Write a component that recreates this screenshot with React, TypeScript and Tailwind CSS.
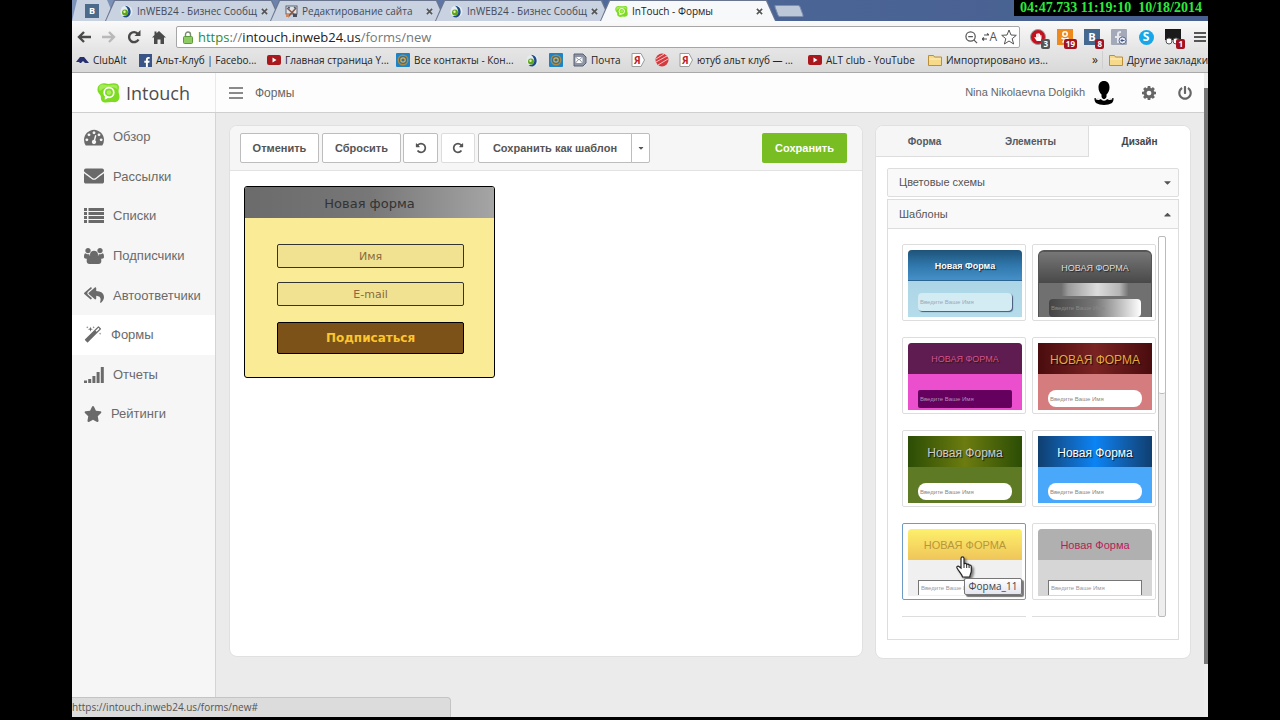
import type { ReactNode } from 'react';
import clsx from 'clsx';
import {
  FaEnvelope,
  FaReplyAll,
  FaStar,
  FaPowerOff,
  FaCaretDown,
  FaCaretUp,
  FaFacebookF,
  FaHandPaper,
} from 'react-icons/fa';

type IconProps = { className?: string };

/* ---------- Icons ---------- */

function GaugeIcon({ className }: IconProps) {
  return (
    <svg viewBox="0 0 1792 1792" fill="currentColor" className={className}>
      <path d="M384 1152q0-53-37.5-90.5t-90.5-37.5-90.5 37.5-37.5 90.5 37.5 90.5 90.5 37.5 90.5-37.5 37.5-90.5zm192-448q0-53-37.5-90.5t-90.5-37.5-90.5 37.5-37.5 90.5 37.5 90.5 90.5 37.5 90.5-37.5 37.5-90.5zm428 481l101-382q6-26-7.5-48.5t-38.5-29.5-48 6.5-30 39.5l-101 382q-60 5-107 43.5t-63 98.5q-20 77 20 146t117 89 146-20 89-117q16-60-6-117t-72-91zm660-33q0-53-37.5-90.5t-90.5-37.5-90.5 37.5-37.5 90.5 37.5 90.5 90.5 37.5 90.5-37.5 37.5-90.5zm-640-640q0-53-37.5-90.5t-90.5-37.5-90.5 37.5-37.5 90.5 37.5 90.5 90.5 37.5 90.5-37.5 37.5-90.5zm448 192q0-53-37.5-90.5t-90.5-37.5-90.5 37.5-37.5 90.5 37.5 90.5 90.5 37.5 90.5-37.5 37.5-90.5zm320 448q0 261-141 483-19 29-54 29h-1402q-35 0-54-29-141-221-141-483 0-182 71-348t191-286 286-191 348-71 348 71 286 191 191 286 71 348z" />
    </svg>
  );
}

function ListIcon({ className }: IconProps) {
  return (
    <svg viewBox="0 0 20 20" fill="currentColor" className={className}>
      {[2, 6, 10, 14].map((y) => (
        <g key={y}>
          <rect x="0" y={y} width="3" height="3" />
          <rect x="4.5" y={y} width="15.5" height="3" />
        </g>
      ))}
    </svg>
  );
}

function UsersIcon({ className }: IconProps) {
  return (
    <svg viewBox="0 0 1920 1536" fill="currentColor" className={className}>
      <path d="M593 896q-162 5-265 128h-134q-82 0-138-40.5t-56-118.5q0-353 124-353 6 0 43.5 21t97.5 42.5 119 21.5q67 0 133-23-5 37-5 66 0 139 81 256zm1071 381q0 120-73 189.5t-194 69.5h-874q-121 0-194-69.5t-73-189.5q0-53 3.5-103.5t14-109 26.5-108.5 43-97.5 62-81 85.5-53.5 111.5-20q10 0 43 21.5t73 48 107 48 135 21.5 135-21.5 107-48 73-48 43-21.5q61 0 111.5 20t85.5 53.5 62 81 43 97.5 26.5 108.5 14 109 3.5 103.5zm-1024-1021q0 106-75 181t-181 75-181-75-75-181 75-181 181-75 181 75 75 181zm704 384q0 159-112.5 271.5t-271.5 112.5-271.5-112.5-112.5-271.5 112.5-271.5 271.5-112.5 271.5 112.5 112.5 271.5zm576 225q0 78-56 118.5t-138 40.5h-134q-103-123-265-128 81-117 81-256 0-29-5-66 66 23 133 23 59 0 119-21.5t97.5-42.5 43.5-21q124 0 124 353zm-128-609q0 106-75 181t-181 75-181-75-75-181 75-181 181-75 181 75 75 181z" />
    </svg>
  );
}

function MagicIcon({ className }: IconProps) {
  return (
    <svg viewBox="0 0 1792 1792" fill="currentColor" className={className}>
      <path d="M1254 581l293-293-107-107-293 293zm447-293q0 27-18 45l-1286 1286q-18 18-45 18t-45-18l-198-198q-18-18-18-45t18-45l1286-1286q18-18 45-18t45 18l198 198q18 18 18 45zm-1351-190l98 30-98 30-30 98-30-98-98-30 98-30 30-98zm350 162l196 60-196 60-60 196-60-196-196-60 196-60 60-196zm930 478l98 30-98 30-30 98-30-98-98-30 98-30 30-98zm-640-640l98 30-98 30-30 98-30-98-98-30 98-30 30-98z" />
    </svg>
  );
}

function SignalIcon({ className }: IconProps) {
  return (
    <svg viewBox="0 0 20 18" fill="currentColor" className={className}>
      <rect x="0" y="14.5" width="3" height="2.5" />
      <rect x="4.2" y="13" width="3" height="4" />
      <rect x="8.4" y="10" width="3" height="7" />
      <rect x="12.6" y="6" width="3" height="11" />
      <rect x="16.8" y="1" width="3" height="16" />
    </svg>
  );
}

function UndoIcon({ className }: IconProps) {
  return (
    <svg viewBox="0 0 1792 1792" fill="currentColor" className={className}>
      <path d="M1664 896q0 156-61 298t-164 245-245 164-298 61q-172 0-327-72.5t-264-204.5q-7-10-6.5-22.5t8.5-20.5l137-138q10-9 25-9 16 2 23 12 73 95 179 147t225 52q104 0 198.5-40.5t163.5-109.5 109.5-163.5 40.5-198.5-40.5-198.5-109.5-163.5-163.5-109.5-198.5-40.5q-98 0-188 35.5t-160 101.5l137 138q31 30 14 69-17 40-59 40h-448q-26 0-45-19t-19-45v-448q0-42 40-59 39-17 69 14l130 129q107-101 244.5-156.5t284.5-55.5q156 0 298 61t245 164 164 245 61 298z" />
    </svg>
  );
}

function CogIcon({ className }: IconProps) {
  return (
    <svg viewBox="128 128 1536 1536" fill="currentColor" className={className}>
      <path d="M1152 896q0-106-75-181t-181-75-181 75-75 181 75 181 181 75 181-75 75-181zm512-109v222q0 12-8 23t-20 13l-185 28q-19 54-39 91 35 50 107 138 10 12 10 25t-9 23q-27 37-99 108t-94 71q-12 0-26-9l-138-108q-44 23-91 38-16 136-29 186-7 28-36 28h-222q-14 0-24.5-8.5t-11.5-21.5l-28-184q-49-16-90-37l-141 107q-10 9-25 9-14 0-25-11-126-114-165-168-7-10-7-23 0-12 8-23 15-21 51-66.5t54-70.5q-27-50-41-99l-183-27q-13-2-21-12.5t-8-23.5v-222q0-12 8-23t19-13l186-28q14-46 39-92-40-57-107-138-10-12-10-24 0-10 9-23 26-36 98.5-107.5t94.5-71.5q13 0 26 10l138 107q44-23 91-38 16-136 29-186 7-28 36-28h222q14 0 24.5 8.5t11.5 21.5l28 184q49 16 90 37l142-107q9-9 24-9 13 0 25 10 129 119 165 170 7 8 7 22 0 12-8 23-15 21-51 66.5t-54 70.5q26 50 41 98l183 28q13 2 21 12.5t8 23.5z" />
    </svg>
  );
}

function IntouchLogo({ className }: IconProps) {
  return (
    <svg viewBox="0 0 24 22" className={className}>
      <path
        d="M4 1.5c3-1.500 5 0 8 0s6-1.500 9 0c2.500 1.500 2 4 1.500 6.500s1.500 5 1 8c-.7 4-4 5-7.500 4.500-3-.4-5 .8-8 .3-3.500-.6-4-3-4-6C4 12.500.5 11 .5 7.500.5 4.500 1.500 2.500 4 1.500z"
        fill="#7ddc1f"
      />
      <path d="M4 2.500c3-1 5 .5 8 .5s6-1.500 8.500 0c1 .8 1 2.500.8 4C16 3.500 8 4 3 9 1.500 6.500 2 3.500 4 2.500z" fill="#a5ea58" />
      <circle cx="12.500" cy="10.500" r="5" fill="none" stroke="#fff" strokeWidth="1.800" />
      <path d="M8.500 12.500L8 18l5-2.500z" fill="#fff" />
      <circle cx="12.500" cy="10.500" r="2.500" fill="#a9ec5c" />
    </svg>
  );
}

function SwirlIcon() {
  return (
    <svg viewBox="0 0 13 13" className="size-[13px] shrink-0">
      <circle cx="6.500" cy="6.500" r="6" fill="#e4ecf2" />
      <path d="M5 .8a6 6 0 0 1 1.500 11.700 6 6 0 0 1-4-1.500C8 12 11 6 5 .8z" fill="#1d4a86" />
      <circle cx="5" cy="7.500" r="3" fill="#5da51f" />
      <circle cx="4.500" cy="6.800" r="1.200" fill="#e5f3a5" />
    </svg>
  );
}

function ToolsIcon() {
  return (
    <svg viewBox="0 0 13 13" className="size-[13px] shrink-0">
      <rect x="1" y="1" width="11" height="8" fill="#dfe4ea" stroke="#5e6570" />
      <path d="M2 3l9 8M11 3l-8 9" stroke="#8a5a44" strokeWidth="1.600" />
      <path d="M3 2.500l2 .5M9 2l2 1.500" stroke="#3f5f93" strokeWidth="1.500" />
      <rect x="8" y="9" width="4" height="3" fill="#4b4f5c" />
      <rect x="1" y="9" width="3" height="3" fill="#c58a6a" />
    </svg>
  );
}

function YoutubeIcon() {
  return (
    <svg viewBox="0 0 14 10" className="h-[10px] w-[14px] shrink-0">
      <rect width="14" height="10" rx="2" fill="#a8181c" />
      <path d="M5.500 2.500v5l4-2.500z" fill="#fff" />
    </svg>
  );
}

function AtIcon() {
  return (
    <svg viewBox="0 0 14 14" className="size-[14px] shrink-0">
      <rect width="14" height="14" rx="1" fill="#1c84c6" />
      <circle cx="7" cy="7" r="4.800" fill="#3f6f86" stroke="#a98a4a" strokeWidth="1.400" />
      <circle cx="7" cy="7" r="2.200" fill="none" stroke="#d8b25c" strokeWidth="1.200" />
    </svg>
  );
}

function MailTagIcon() {
  return (
    <svg viewBox="0 0 14 14" className="size-[14px] shrink-0">
      <path d="M1 1h9l3 3v6l-3 3H1z" fill="#8d95a5" stroke="#596175" />
      <rect x="2.500" y="4" width="7" height="6" fill="#fff" />
      <path d="M2.500 4l3.500 3 3.500-3M2.500 10l2.500-3M9.500 10L7 7" stroke="#717b90" fill="none" strokeWidth=".8" />
    </svg>
  );
}

function YandexIcon() {
  return (
    <span className="relative flex size-[14px] shrink-0 items-center">
      <svg viewBox="0 0 14 14" className="absolute inset-0">
        <path d="M1 .5h9l3.500 6.500-3.500 6.500H1z" fill="#fdfdfd" stroke="#9b9b9b" />
      </svg>
      <span className="relative pl-[3px] text-[10px] leading-none font-bold text-[#c0202c]">Я</span>
    </span>
  );
}

function RedGlobeIcon() {
  return (
    <svg viewBox="0 0 14 14" className="size-[14px] shrink-0">
      <circle cx="7" cy="7" r="6.500" fill="#d63a3f" />
      <path d="M1 6l8-5M1 9l11-6M3 12l10-6" stroke="#f3c4c4" strokeWidth="1" />
    </svg>
  );
}

function FolderIcon() {
  return (
    <svg viewBox="0 0 14 12" className="h-[12px] w-[14px] shrink-0">
      <path d="M.5 1.500h5l1 1.500h7v8.500H.5z" fill="#f7d98a" stroke="#b98f3a" />
      <path d="M1 5h12" stroke="#fdf0c4" />
    </svg>
  );
}

function ClubIcon() {
  return (
    <svg viewBox="0 0 13 8" className="h-[8px] w-[13px] shrink-0">
      <path d="M0 6l4-5h4l5 6H9L7 5 5 7H3l1-1z" fill="#26306e" />
    </svg>
  );
}

/* ---------- Browser chrome ---------- */

type BrowserTabProps = { icon: ReactNode; title: string; active?: boolean };

function BrowserTab({ icon, title, active }: BrowserTabProps) {
  return (
    <div
      className={clsx(
        '-ml-[11px] h-[21px] w-44 shrink-0 bg-[#69758f] px-px pt-px [clip-path:polygon(0_100%,9px_0,calc(100%-9px)_0,100%_100%)]',
        active && 'relative z-10',
      )}
    >
      <div
        className={clsx(
          'flex h-5 items-center gap-1 pr-3 pl-[14px] [clip-path:polygon(0_100%,9px_0,calc(100%-9px)_0,100%_100%)]',
          active ? 'bg-[#f7f8fa]' : 'bg-[#c9d2e0]',
        )}
      >
        {icon}
        <span
          className={clsx(
            'w-[126px] text-[10px] whitespace-nowrap',
            active ? 'text-[#222]' : 'text-[#444b58]',
          )}
        >
          {title}
        </span>
        <button aria-label="Закрыть вкладку" className="text-[#555]">
          <svg viewBox="0 0 8 8" className="size-[7px]" stroke="currentColor" strokeWidth="1.800">
            <path d="M1 1l6 6M7 1L1 7" />
          </svg>
        </button>
      </div>
    </div>
  );
}

function TabStrip() {
  return (
    <div className="flex h-[21px] items-end overflow-hidden bg-gradient-to-r from-[#7f93b8] via-[#4c6699] to-[#47608f]">
      <div className="flex h-[21px] w-[44px] shrink-0 items-center bg-[#c9d2e0] pl-[13px] [clip-path:polygon(0_100%,5px_0,calc(100%-9px)_0,100%_100%)]">
        <span className="flex size-[14px] items-center justify-center bg-[#4c6a8c] text-[9px] font-bold text-white">
          B
        </span>
      </div>
      <BrowserTab icon={<SwirlIcon />} title="InWEB24 - Бизнес Сообщ" />
      <BrowserTab icon={<ToolsIcon />} title="Редактирование сайта" />
      <BrowserTab icon={<SwirlIcon />} title="InWEB24 - Бизнес Сообщ" />
      <BrowserTab icon={<IntouchLogo className="size-[13px] shrink-0" />} title="InTouch - Формы" active />
      <button
        aria-label="Новая вкладка"
        className="mb-1 h-3 w-[26px] shrink-0 skew-x-[20deg] rounded-xs border border-[#7e8fae] bg-[#bcc7d8]"
      />
      <div className="ml-auto h-[21px] shrink-0">
        <div className="h-4 bg-black px-[6px] font-['Liberation_Serif',serif] text-[14px] leading-4 font-bold whitespace-pre text-[#2bea3a]">
          04:47.733 11:19:10{'  '}10/18/2014
        </div>
      </div>
    </div>
  );
}

type ExtensionProps = { label: string; badge?: string; badgeClass?: string; children: ReactNode };

function Extension({ label, badge, badgeClass, children }: ExtensionProps) {
  return (
    <button aria-label={label} className="relative flex size-4 shrink-0 items-center justify-center">
      {children}
      {badge && (
        <span
          className={clsx(
            'absolute -right-1 -bottom-1 rounded-xs px-[2px] text-[8px] leading-[10px] font-bold text-white',
            badgeClass,
          )}
        >
          {badge}
        </span>
      )}
    </button>
  );
}

function AddressBar() {
  return (
    <div className="relative z-10 flex h-[27px] items-center bg-gradient-to-b from-[#fafafa] to-[#e6e6e6] pt-[5px] pl-[5px]">
      <div className="flex w-[99px] shrink-0 items-center gap-[11px] text-[#4a4a4a]">
        <svg viewBox="0 0 14 12" className="h-[12px] w-[14px]" fill="none" stroke="currentColor" strokeWidth="2.400">
          <path d="M14 6H2M7 1L2 6l5 5" />
        </svg>
        <svg viewBox="0 0 14 12" className="h-[12px] w-[14px]" fill="none" stroke="#b9b9b9" strokeWidth="2.400">
          <path d="M0 6h12M7 1l5 5-5 5" />
        </svg>
        <svg viewBox="0 0 14 14" className="size-[14px]" fill="none" stroke="currentColor" strokeWidth="2.400">
          <path d="M11.500 9.500A5 5 0 1 1 11 4" />
          <path d="M13.500 0v6h-6z" fill="currentColor" stroke="none" />
        </svg>
        <svg viewBox="0 0 14 14" className="size-[14px]" fill="currentColor">
          <path d="M7 1l7 6.500h-2V14H8.500V9.500h-3V14H2V7.500H0L2.500 5V1.500h2v1.700z" />
        </svg>
      </div>
      <div className="flex h-[22px] min-w-0 flex-1 items-center rounded-xs border border-[#a6a6a6] bg-white px-[6px]">
        <svg viewBox="0 0 10 13" className="mr-[5px] h-[13px] w-[10px] shrink-0">
          <path d="M2.500 6V3.500a2.500 2.500 0 0 1 5 0V6" fill="none" stroke="#7c8b74" strokeWidth="1.400" />
          <rect x=".5" y="5.500" width="9" height="7" rx="1" fill="#8ecb62" stroke="#5d9a3c" />
        </svg>
        <span className="text-[13px] leading-none whitespace-nowrap text-[#777]">
          <span className="text-[#2c8a34]">https</span>://
          <span className="text-[#222]">intouch.inweb24.us</span>/forms/new
        </span>
        <div className="-mr-1 ml-auto flex items-center gap-1 text-[#555]">
          <svg viewBox="0 0 14 14" className="size-[13px]" fill="none" stroke="currentColor" strokeWidth="1.300">
            <circle cx="6" cy="6" r="5" />
            <path d="M3.500 6h5M9.500 9.500L13 13" />
          </svg>
          <span className="flex items-center text-[12px] leading-none">
            <svg viewBox="0 0 7 8" className="h-2 w-[7px]" fill="none" stroke="currentColor" strokeWidth="1.200">
              <path d="M2 2h5M5 .5L7 2M0 6h5M2 4.500L0 6l2 1.500" />
            </svg>
            A
          </span>
          <svg viewBox="0 0 16 16" className="size-4" fill="none" stroke="currentColor">
            <path d="M8 1l2 5 5.300.3-4.100 3.400L12.600 15 8 12l-4.600 3 1.400-5.300L.7 6.300 6 6z" />
          </svg>
        </div>
      </div>
      <div className="ml-[10px] flex w-[178px] shrink-0 items-center gap-[11px]">
        <Extension label="AdBlock" badge="3" badgeClass="bg-[#555]">
          <span className="flex size-4 items-center justify-center rounded-full border border-[#999] bg-[#c1121f]">
            <FaHandPaper className="size-2 text-white" />
          </span>
        </Extension>
        <Extension label="Одноклассники" badge="19" badgeClass="bg-[#a3121f]">
          <svg viewBox="0 0 16 16" className="size-4">
            <rect width="16" height="16" fill="#ee8a1d" />
            <circle cx="8" cy="5" r="2.200" fill="none" stroke="#fff" strokeWidth="1.500" />
            <path d="M4.500 9q3.500 2 7 0M8 10.500L5.500 13.500M8 10.500l2.500 3" stroke="#fff" strokeWidth="1.500" fill="none" />
          </svg>
        </Extension>
        <Extension label="ВКонтакте" badge="8" badgeClass="bg-[#a3121f]">
          <span className="flex size-4 items-center justify-center bg-[#45688e] text-[11px] font-bold text-white">
            B
          </span>
        </Extension>
        <Extension label="Facebook">
          <svg viewBox="0 0 16 16" className="size-4">
            <rect width="16" height="16" rx="1" fill="#a3a9b8" />
            <path d="M7 14V5q0-2 3-2M4 8h6" stroke="#e6e8ee" strokeWidth="2" fill="none" />
            <circle cx="11.500" cy="11.500" r="3.500" fill="#e9ecf3" stroke="#5b6c96" />
            <path d="M13.500 11.500h-3.500M11.500 10L10 11.500l1.500 1.500" stroke="#3f5384" fill="none" />
          </svg>
        </Extension>
        <Extension label="Skype">
          <span className="flex size-[15px] items-center justify-center rounded-full bg-[#17a6e8] text-[12px] leading-none font-bold text-white">
            S
          </span>
        </Extension>
        <Extension label="Граббер" badge="1" badgeClass="bg-[#a3121f]">
          <svg viewBox="0 0 16 16" className="size-4">
            <path d="M0 0h16v11H0z" fill="#1a1a1a" />
            <circle cx="4" cy="12" r="3" fill="#fff" stroke="#555" />
            <circle cx="11" cy="12" r="3" fill="#fff" stroke="#555" />
          </svg>
        </Extension>
        <button aria-label="Меню" className="flex w-[14px] shrink-0 flex-col gap-[2px] pl-[2px]">
          <span className="h-[2px] bg-[#555]" />
          <span className="h-[2px] bg-[#555]" />
          <span className="h-[2px] bg-[#555]" />
        </button>
      </div>
    </div>
  );
}

const bookmarks: { icon: ReactNode; label?: string; width: string }[] = [
  { icon: <ClubIcon />, label: 'ClubAlt', width: 'w-[63px]' },
  {
    icon: (
      <span className="flex size-[13px] shrink-0 items-end justify-end bg-[#3b5486]">
        <FaFacebookF className="size-[10px] text-white" />
      </span>
    ),
    label: 'Альт-Клуб | Facebo...',
    width: 'w-[128px]',
  },
  { icon: <YoutubeIcon />, label: 'Главная страница Y...', width: 'w-[129px]' },
  { icon: <AtIcon />, label: 'Все контакты - Кон...', width: 'w-[130px]' },
  { icon: <SwirlIcon />, width: 'w-[23px]' },
  { icon: <AtIcon />, width: 'w-[24px]' },
  { icon: <MailTagIcon />, label: 'Почта', width: 'w-[58px]' },
  { icon: <YandexIcon />, width: 'w-[24px]' },
  { icon: <RedGlobeIcon />, width: 'w-[24px]' },
  { icon: <YandexIcon />, label: 'ютуб альт клуб — ...', width: 'w-[129px]' },
  { icon: <YoutubeIcon />, label: 'ALT club - YouTube', width: 'w-[120px]' },
  { icon: <FolderIcon />, label: 'Импортировано из...', width: 'w-[130px]' },
];

function BookmarksBar() {
  return (
    <div className="flex h-[25px] items-center overflow-hidden border-b border-[#a9a9a9] bg-gradient-to-b from-[#e6e6e6] to-[#d9d9d9] pl-1 text-[10px] text-[#222]">
      {bookmarks.map((b, i) => (
        <a key={i} href="#" className={clsx('flex shrink-0 items-center gap-1 whitespace-nowrap', b.width)}>
          {b.icon}
          {b.label}
        </a>
      ))}
      <div className="ml-auto flex w-[116px] shrink-0 items-center">
        <button aria-label="Другие элементы" className="w-[16px] border-r border-[#cfcfcf] text-left text-[12px]">
          »
        </button>
        <a href="#" className="flex items-center gap-1 pl-[6px] whitespace-nowrap">
          <FolderIcon />
          Другие закладки
        </a>
      </div>
    </div>
  );
}

/* ---------- App ---------- */

function AppHeader() {
  return (
    <header className="flex h-10 shrink-0 border-b border-[#cfcfcf] bg-[#fdfdfd]">
      <a href="#" className="flex w-36 shrink-0 items-center gap-[6px] border-r border-[#e9e9e9] pl-[25px]">
        <IntouchLogo className="h-[22px] w-[23px]" />
        <span className="font-['Open_Sans',sans-serif] text-[18px] leading-none text-[#4d4d4d]">Intouch</span>
      </a>
      <button aria-label="Свернуть меню" className="ml-[13px] flex flex-col justify-center gap-[3px]">
        <span className="h-[2px] w-[14px] bg-[#8a8a8a]" />
        <span className="h-[2px] w-[14px] bg-[#8a8a8a]" />
        <span className="h-[2px] w-[14px] bg-[#8a8a8a]" />
      </button>
      <h1 className="ml-3 self-center text-[12px] text-[#666]">Формы</h1>
      <div className="ml-auto flex items-center pr-3 text-[#666]">
        <span className="text-[11px]">Nina Nikolaevna Dolgikh</span>
        <svg viewBox="0 0 20 24" className="ml-[9px] h-6 w-5">
          <path
            d="M10 0c3.500 0 5.500 2.500 5.500 6.500 0 3-1.300 5.500-3 7v3.300c1.200 1.600 3.700 1 7 .2.300 2-.6 4-1.500 5-2 1.300-5 2-8 2s-6-.7-8-2c-.9-1-1.800-3-1.500-5 3.300.8 5.800 1.400 7-.2v-3.300c-1.700-1.500-3-4-3-7C4.500 2.500 6.500 0 10 0z"
            fill="#000"
          />
          <path d="M2 17.500q3 1.500 5-.5 3 4 6 0 2 2 5 .5" stroke="#fdfdfd" strokeWidth="1.600" fill="none" />
        </svg>
        <button aria-label="Настройки" className="ml-7">
          <CogIcon className="size-[14px]" />
        </button>
        <button aria-label="Выйти" className="ml-[22px]">
          <FaPowerOff className="size-[14px]" />
        </button>
      </div>
    </header>
  );
}

const navItems: { label: string; icon: ReactNode; active?: boolean }[] = [
  { label: 'Обзор', icon: <GaugeIcon className="size-5" /> },
  { label: 'Рассылки', icon: <FaEnvelope className="size-5" /> },
  { label: 'Списки', icon: <ListIcon className="size-5" /> },
  { label: 'Подписчики', icon: <UsersIcon className="size-5" /> },
  { label: 'Автоответчики', icon: <FaReplyAll className="size-5" /> },
  { label: 'Формы', icon: <MagicIcon className="size-[18px]" />, active: true },
  { label: 'Отчеты', icon: <SignalIcon className="size-5" /> },
  { label: 'Рейтинги', icon: <FaStar className="size-[18px]" /> },
];

function Sidebar() {
  return (
    <nav className="w-36 shrink-0 border-r border-[#d4d4d4] bg-[#f6f6f6] pt-1">
      <ul className="grid h-[317px] grid-rows-8">
        {navItems.map((item) => (
          <li key={item.label} className="flex">
            <a
              href="#"
              className={clsx(
                'flex flex-1 items-center gap-[9px] pl-3 text-[13px] text-[#6a6a6a]',
                item.active && 'bg-white',
              )}
            >
              {item.icon}
              {item.label}
            </a>
          </li>
        ))}
      </ul>
    </nav>
  );
}

const toolButton =
  'flex h-[30px] items-center justify-center rounded-xs border border-[#bdbdbd] bg-white text-[11px] font-bold text-[#555]';

const formField =
  'h-6 w-[187px] rounded-xs border border-[#333] bg-[#f0e291] text-center text-[11px] placeholder:text-[#8a6a3c]';

function FormPreview() {
  return (
    <form className="w-[251px] overflow-hidden rounded-[3px] border border-black bg-[#faec96] pb-[23px]">
      <h2 className="flex h-[31px] items-center justify-center bg-gradient-to-r from-[#6b6b6b] via-[#777] to-[#a5a5a5] pt-[2px] font-['DejaVu_Sans',sans-serif] text-[13px] text-[#333]">
        Новая форма
      </h2>
      <div className="flex flex-col items-start pt-[26px] pl-8 font-['DejaVu_Sans',sans-serif]">
        <input aria-label="Имя" placeholder="Имя" className={clsx(formField, 'mb-[14px]')} />
        <input aria-label="E-mail" placeholder="E-mail" className={clsx(formField, 'mb-4')} />
        <button
          type="button"
          className="h-8 w-[187px] rounded-xs border border-black bg-[#7d5218] text-[12px] font-bold text-[#fbc62e]"
        >
          Подписаться
        </button>
      </div>
    </form>
  );
}

function Editor() {
  return (
    <section className="mb-[2px] flex min-w-0 flex-1 flex-col overflow-hidden rounded-lg border border-[#e0e0e0] bg-white">
      <div className="flex h-[45px] shrink-0 items-center border-b border-[#e2e2e2] bg-[#f6f6f6] px-[10px]">
        <button className={clsx(toolButton, 'w-[79px]')}>Отменить</button>
        <button className={clsx(toolButton, 'ml-[3px] w-[79px]')}>Сбросить</button>
        <button aria-label="Назад" className={clsx(toolButton, 'ml-[2px] w-[35px]')}>
          <UndoIcon className="size-3" />
        </button>
        <button aria-label="Вперёд" className={clsx(toolButton, 'ml-[3px] w-[34px] border-[#dcdcdc]')}>
          <UndoIcon className="size-3 -scale-x-100" />
        </button>
        <button className={clsx(toolButton, 'ml-[3px] w-[154px] rounded-r-none')}>Сохранить как шаблон</button>
        <button aria-label="Ещё" className={clsx(toolButton, '-ml-px w-[19px] rounded-l-none')}>
          <FaCaretDown className="size-2" />
        </button>
        <button className="mr-[5px] ml-auto h-[30px] w-[85px] rounded-xs bg-[#78bd22] text-[11px] font-bold text-white">
          Сохранить
        </button>
      </div>
      <div className="pt-[15px] pl-[14px]">
        <FormPreview />
      </div>
    </section>
  );
}

type Template = {
  name: string;
  title: string;
  body: string;
  head: string;
  text: string;
  input: string;
  selected?: boolean;
};

const templates: Template[] = [
  {
    name: 'Форма_5',
    title: 'Новая Форма',
    body: 'bg-gradient-to-b from-[#a3cfe3] to-[#b5dcea] rounded-t-sm',
    head: 'bg-gradient-to-b from-[#1f5379] via-[#2f77ab] to-[#4590c8]',
    text: 'text-[9px] font-bold text-white [text-shadow:1px_1px_1px_#123] mb-[-4px] border-b border-[#2b6391]',
    input: 'h-[18px] rounded-sm bg-[#d3ebf3] text-[#9ab] shadow-[1px_1px_1px_#457]',
  },
  {
    name: 'Форма_6',
    title: 'НОВАЯ ФОРМА',
    body: 'bg-[#707070] bg-[linear-gradient(to_right,#707070_20%,#9a9a9a_26%,#dcdcdc_52%,#b5b5b5_72%,#707070_80%)] bg-[length:100%_44px] bg-no-repeat rounded-t-md border-t-2 border-x border-[#555]',
    head: 'bg-gradient-to-b from-[#777] to-[#494949]',
    text: 'text-[9px] text-[#ddd] [text-shadow:1px_1px_1px_#222]',
    input: 'h-[18px] rounded-sm bg-gradient-to-r from-[#444] via-[#777] to-white text-[#888]',
  },
  {
    name: 'Форма_7',
    title: 'НОВАЯ ФОРМА',
    body: 'bg-[#ec4fce] rounded-t-sm',
    head: 'bg-[#5f1c51]',
    text: 'text-[9px] text-[#d5548f] [text-shadow:1px_1px_1px_#311]',
    input: 'h-[18px] rounded-xs bg-[#66005f] text-[#b58cb0]',
  },
  {
    name: 'Форма_8',
    title: 'НОВАЯ ФОРМА',
    body: 'bg-[#d47c7e]',
    head: 'bg-gradient-to-r from-[#4a0c0e] via-[#7a2323] to-[#4a0c0e]',
    text: 'text-[12px] text-[#e6a93c] [text-shadow:1px_1px_1px_#200]',
    input: 'h-[17px] rounded-lg bg-white text-[#888]',
  },
  {
    name: 'Форма_9',
    title: 'Новая Форма',
    body: 'bg-[#5e7a25]',
    head: 'bg-gradient-to-r from-[#2b4d05] via-[#6c7c10] to-[#2b4d05]',
    text: 'text-[12px] text-[#ccc] [text-shadow:1px_1px_1px_#111]',
    input: 'h-[17px] rounded-lg bg-white text-[#888]',
  },
  {
    name: 'Форма_10',
    title: 'Новая Форма',
    body: 'bg-[#4aa8fa]',
    head: 'bg-gradient-to-r from-[#0f3f70] via-[#0a84f5] to-[#0f3f70]',
    text: 'text-[12px] text-white [text-shadow:1px_1px_1px_#012]',
    input: 'h-[17px] rounded-lg bg-white text-[#888]',
  },
  {
    name: 'Форма_11',
    title: 'НОВАЯ ФОРМА',
    body: 'bg-[#f0f0f0] rounded-t-sm',
    head: 'bg-gradient-to-b from-[#fdf06a] to-[#efc55a]',
    text: 'text-[11px] text-[#b8963a]',
    input: 'h-[15px] mt-1 border border-[#777] border-b-0 bg-white text-[#999]',
    selected: true,
  },
  {
    name: 'Форма_12',
    title: 'Новая Форма',
    body: 'bg-[#d6d6d6] rounded-t-sm',
    head: 'bg-[#b0b0b0]',
    text: 'text-[11px] text-[#b81c58]',
    input: 'h-[15px] mt-1 border border-[#777] border-b-0 bg-white text-[#999]',
  },
];

function PointerHand({ className }: IconProps) {
  return (
    <svg viewBox="0 0 16 22" className={className}>
      <path
        d="M5 12V2.500C5 .3 8 .3 8 2.500V8c.5-1 2.500-.8 2.700.5.700-.8 2.200-.4 2.400.8 1-.5 2.200 0 2.200 1.500V15c0 2-1.300 3-1.500 6H6.500C6 18 2.500 15 1 12c-.6-1.800 1.200-2.400 2.300-1.200z"
        fill="#fff"
        stroke="#222"
        strokeWidth="1.200"
      />
      <path d="M8 8v4M10.700 9v3M13.100 10v2" stroke="#222" />
    </svg>
  );
}

function TemplateCard({ template: t }: { template: Template }) {
  return (
    <button
      aria-label={t.name}
      className={clsx(
        'relative h-[77px] w-[124px] rounded-xs border bg-white py-[5px] pr-[3px] pl-[5px]',
        t.selected ? 'border-[#6d9bc4]' : 'border-[#ddd]',
      )}
    >
      <span className={clsx('flex h-[67px] w-full flex-col overflow-hidden', t.body)}>
        <span
          className={clsx(
            'flex h-[31px] shrink-0 items-center justify-center pt-[2px] leading-none whitespace-nowrap',
            t.head,
            t.text,
          )}
        >
          {t.title}
        </span>
        <span className="px-[10px] pt-4">
          <span className={clsx('flex items-center pl-[2px] text-[6px] leading-none', t.input)}>
            Введите Ваше Имя
          </span>
        </span>
      </span>
      {t.selected && (
        <>
          <PointerHand className="absolute top-8 left-[53px] z-10 h-[22px] w-4 drop-shadow-[2px_2px_1px_#0007]" />
          <span
            role="tooltip"
            className="absolute top-[54px] left-[61px] z-10 flex h-[17px] w-[58px] items-center justify-center rounded-xs border border-[#777] bg-gradient-to-b from-white to-[#e4e5f0] font-['Open_Sans',sans-serif] text-[10px] text-[#444] shadow-[2px_2px_1px_#0008]"
          >
            {t.name}
          </span>
        </>
      )}
    </button>
  );
}

function DesignPanel() {
  return (
    <aside className="flex w-[316px] shrink-0 flex-col overflow-hidden rounded-lg border border-[#e0e0e0] bg-white">
      <div role="tablist" className="flex h-[31px] shrink-0 text-[10px] font-bold text-[#555a63]">
        <button role="tab" className="w-[97px] border-b border-[#ddd] bg-[#f6f6f6]">
          Форма
        </button>
        <button role="tab" className="flex-1 border-b border-[#ddd] bg-[#f6f6f6]">
          Элементы
        </button>
        <button role="tab" aria-selected="true" className="w-[102px] border-l border-[#ddd] bg-white text-[#444]">
          Дизайн
        </button>
      </div>
      <div className="flex flex-1 flex-col gap-[2px] px-[11px] pt-[11px] pb-[18px] text-[11px] text-[#555]">
        <button className="flex h-[29px] shrink-0 items-center justify-between rounded-xs border border-[#ddd] bg-[#f9f9f9] pr-[5px] pl-[11px]">
          Цветовые схемы
          <FaCaretDown className="size-[11px]" />
        </button>
        <div className="flex flex-1 flex-col border border-[#ddd]">
          <button className="flex h-[29px] shrink-0 items-center justify-between border-b border-[#ddd] bg-[#f9f9f9] pr-[5px] pl-[11px]">
            Шаблоны
            <FaCaretUp className="size-[11px]" />
          </button>
          <div className="flex pt-[7px] pb-[22px] pl-[14px]">
            <div className="grid h-[381px] w-[254px] shrink-0 auto-rows-[77px] grid-cols-2 gap-x-[6px] gap-y-4 overflow-hidden pt-2">
              {templates.map((t) => (
                <TemplateCard key={t.name} template={t} />
              ))}
              <span className="border-t border-[#ddd]" />
              <span className="border-t border-[#ddd]" />
            </div>
            <div className="ml-[2px] h-[381px] w-2 rounded-xs border border-[#bbb] bg-[#eee]">
              <div className="h-[157px] rounded-xs border-b border-[#bbb] bg-white" />
            </div>
          </div>
        </div>
      </div>
    </aside>
  );
}

export default function App() {
  return (
    <div className="flex min-h-screen flex-col bg-black px-[72px] pb-[3px]">
      <div className="relative flex min-w-0 flex-1 flex-col overflow-hidden">
        <div className="font-['Open_Sans','Noto_Sans',sans-serif]">
          <TabStrip />
          <AddressBar />
          <BookmarksBar />
        </div>

        <div className="flex flex-1 font-['Liberation_Sans',Arial,sans-serif]">
          <div className="flex min-w-0 flex-1 flex-col">
            <AppHeader />
            <div className="flex flex-1 bg-[#ebebeb]">
              <Sidebar />
              <main className="flex min-w-0 flex-1 gap-3 pt-3 pr-[13px] pb-[58px] pl-[13px]">
                <Editor />
                <DesignPanel />
              </main>
            </div>
          </div>
          {/* Page scrollbar */}
          <div className="flex w-1 flex-col bg-[#ededed] pt-[15px] pb-[53px]">
            <div className="flex-1 bg-[#777]" />
          </div>
        </div>

        {/* Link status bubble */}
        <div className="absolute bottom-0 left-0 flex h-5 w-[379px] items-center rounded-tr-sm border-t border-r border-[#c4c4c4] bg-[#dcdcdc] font-['Open_Sans',sans-serif] text-[10px] text-[#555]">
          https://intouch.inweb24.us/forms/new#
        </div>
      </div>
    </div>
  );
}
